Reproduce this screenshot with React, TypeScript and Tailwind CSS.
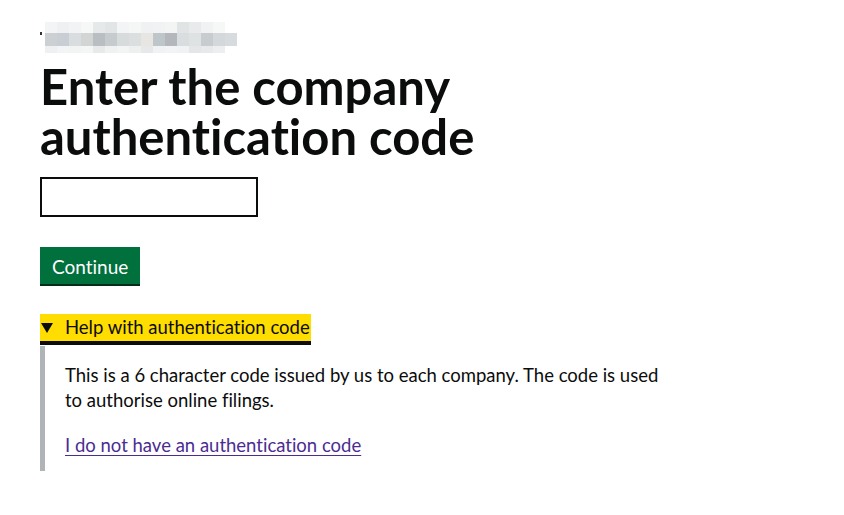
import React from "react";

const top = ["#f3f4f5","#eef0f1","#f2f3f4","#f6f7f7","#e6e9ea","#e2e5e6","#f3f4f5","#f5f6f6","#eff1f2","#f1f2f3","#f3f4f4","#e1e4e5","#e8eaeb","#f1f2f3","#f6f7f7","#ffffff"];
const mid = ["#ccd0d2","#c8ced3","#dadddf","#d3d5d4","#b9bec2","#c6ccce","#d8dbdc","#dcdfe0","#e8e6e2","#bfc6ca","#b4b8bc","#dadddf","#dfe2e3","#c9ccce","#d5d8da","#d8dbdd"];
const bot = ["#eef0f1","#f3f4f5","#f2f3f3","#f4f5f5","#e8eaea","#f0f1f2","#f3f4f4","#eef0f0","#e6e8e9","#f0f2f3","#f3f4f5","#f1f2f3","#e4e6e7","#e7e9ea","#eceeef","#ffffff"];

export default function App() {
  return (
    <div className="min-h-[515px] bg-white px-10 pt-[22px] [font-variant-ligatures:none]" style={{ fontFamily: "Lato, 'Liberation Sans', sans-serif" }}>
      <div className="relative flex flex-col w-[198px]">
        <div className="absolute left-0 top-[10px] w-[2px] h-[3px] bg-[#333]" />
        <div className="flex ml-[5px]">{top.map((c, i) => <div key={i} className="h-[11px] w-[12px]" style={{ background: c }} />)}</div>
        <div className="flex ml-[5px]">{mid.map((c, i) => <div key={i} className="h-[13px] w-[12px]" style={{ background: c }} />)}</div>
        <div className="flex ml-[5px]">{bot.map((c, i) => <div key={i} className="h-[7px] w-[12px]" style={{ background: c }} />)}</div>
      </div>
      <h1 className="mt-[8px] text-[49px] leading-[50px] font-bold text-[#0b0c0c]">
        Enter the company<br />authentication code
      </h1>
      <input className="mt-[16px] block w-[218px] h-[40px] border-2 border-[#0b0c0c] outline-none" />
      <button className="mt-[30px] block bg-[#00703c] text-white text-[19px] leading-[19px] px-[12px] pt-[10px] pb-[8px] shadow-[0_2px_0_#002d18]">
        Continue
      </button>
      <div className="mt-[30px]">
        <div className="inline-flex items-center bg-[#ffdd00] h-[27px] border-b-4 border-[#0b0c0c] box-content text-[#0b0c0c] text-[18.5px]">
          <span className="w-[25px] pl-[1px] flex items-center">
            <svg width="12" height="10" viewBox="0 0 12 10"><polygon points="0,0 12,0 6,10" fill="#0b0c0c" /></svg>
          </span>
          <span className="pr-[1px]">Help with authentication code</span>
        </div>
        <div className="mt-[1px] border-l-[5px] border-[#b1b4b6] pl-[20px] pt-[17px] pb-[13px] text-[18.5px] leading-[25px] text-[#0b0c0c]">
          <p className="w-[600px]">This is a 6 character code issued by us to each company. The code is used to authorise online filings.</p>
          <a href="#" className="block mt-[20px] text-[#4c2c92] underline underline-offset-[3px]">I do not have an authentication code</a>
        </div>
      </div>
    </div>
  );
}
